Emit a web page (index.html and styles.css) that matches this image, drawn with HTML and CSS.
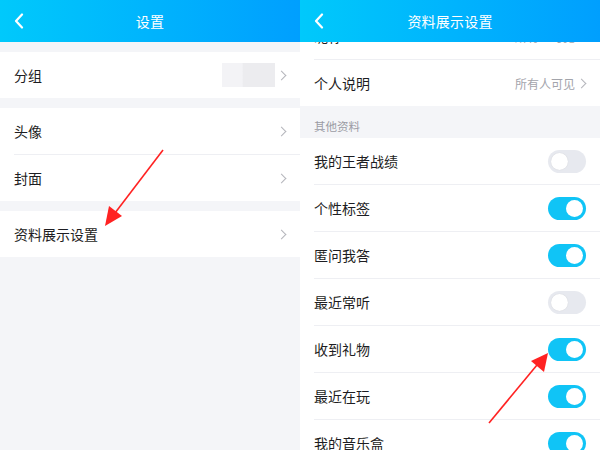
FILE: index.html
```html
<!DOCTYPE html>
<html lang="zh-CN">
<head>
<meta charset="utf-8">
<link rel="stylesheet" href="styles.css">
</head>
<body>
<div class="page">
  <section class="screen">
    <header class="bar">
      <svg class="back" width="10" height="16" viewBox="0 0 10 16"><path d="M8 1.5 L2 8 L8 14.5" fill="none" stroke="#fff" stroke-width="2.2" stroke-linecap="round" stroke-linejoin="round"/></svg>
      <h1 class="title">设置</h1>
    </header>
    <div class="body">
      <div class="group">
        <div class="row"><span class="label">分组</span><span class="blur"></span><span class="chev"></span></div>
      </div>
      <div class="group">
        <div class="row line"><span class="label">头像</span><span class="chev"></span></div>
        <div class="row"><span class="label">封面</span><span class="chev"></span></div>
      </div>
      <div class="group">
        <div class="row"><span class="label">资料展示设置</span><span class="chev"></span></div>
      </div>
    </div>
  </section>
  <section class="screen">
    <header class="bar">
      <svg class="back" width="10" height="16" viewBox="0 0 10 16"><path d="M8 1.5 L2 8 L8 14.5" fill="none" stroke="#fff" stroke-width="2.2" stroke-linecap="round" stroke-linejoin="round"/></svg>
      <h1 class="title">资料展示设置</h1>
    </header>
    <div class="scroll">
      <div class="list">
        <div class="row line"><span class="label">昵称</span><span class="value">所有人可见</span><span class="chev"></span></div>
        <div class="row"><span class="label">个人说明</span><span class="value">所有人可见</span><span class="chev"></span></div>
        <div class="section">其他资料</div>
        <div class="row line"><span class="label">我的王者战绩</span><span class="toggle"></span></div>
        <div class="row line"><span class="label">个性标签</span><span class="toggle on"></span></div>
        <div class="row line"><span class="label">匿问我答</span><span class="toggle on"></span></div>
        <div class="row line"><span class="label">最近常听</span><span class="toggle"></span></div>
        <div class="row line"><span class="label">收到礼物</span><span class="toggle on"></span></div>
        <div class="row line"><span class="label">最近在玩</span><span class="toggle on"></span></div>
        <div class="row"><span class="label">我的音乐盒</span><span class="toggle on"></span></div>
      </div>
    </div>
  </section>
  <svg class="arrows" width="600" height="450" viewBox="0 0 600 450">
    <line x1="163" y1="150" x2="115" y2="213" stroke="#f22" stroke-width="1.6"/>
    <polygon points="105,226 109,206 122,216" fill="#f22"/>
    <line x1="489" y1="423" x2="537" y2="365" stroke="#f22" stroke-width="1.6"/>
    <polygon points="548,353 544,372 531,361" fill="#f22"/>
  </svg>
</div>
</body>
</html>
```
FILE: styles.css
```css
* { box-sizing: border-box; margin: 0; padding: 0; }
html, body { width: 600px; height: 450px; overflow: hidden; }
body { font-family: "Noto Sans CJK SC", "Noto Sans", sans-serif; color: #1d1d22; background: #f4f5f8; }
.page { position: relative; display: flex; width: 600px; height: 450px; }
.screen { width: 300px; height: 450px; display: flex; flex-direction: column; background: #f4f5f8; overflow: hidden; }
.bar { height: 42px; flex: none; display: flex; align-items: center; justify-content: center; position: relative; background: linear-gradient(90deg, #00c9fb 0%, #00b4fd 50%, #009ffe 100%); }
.back { position: absolute; left: 14px; top: 13px; }
.title { font-size: 14px; font-weight: 400; color: #fff; letter-spacing: 0.2px; }
.body { padding-top: 10px; display: flex; flex-direction: column; gap: 10px; }
.group { background: #fff; }
.row { height: 46px; display: flex; align-items: center; padding: 0 13px 0 14px; background: #fff; position: relative; }
.row.line { height: 47px; padding-bottom: 1px; }
.row.line::after { content: ""; position: absolute; left: 14px; right: 0; bottom: 0; height: 1px; background: #eeeff3; }
.label { font-size: 14px; flex: 1; }
.value { font-size: 12px; color: #a3a4ab; margin-right: 3px; }
.chev { width: 7px; height: 7px; border-top: 1.3px solid #b4b5bb; border-right: 1.3px solid #b4b5bb; transform: rotate(45deg); margin-right: 2px; }
.blur { width: 53px; height: 24px; margin-right: 3px; background: linear-gradient(90deg, #f3f3f6 0%, #f3f3f6 38%, #ececef 40%, #ececef 100%); filter: blur(0.6px); }
.scroll { flex: 1; overflow: hidden; }
.list { margin-top: -29px; }
.section { height: 32px; background: #f4f5f8; font-size: 11.5px; color: #9b9ca4; padding: 0 0 4px 14px; display: flex; align-items: flex-end; }
.toggle { width: 38px; height: 23px; border-radius: 12px; background: #e7e9ef; position: relative; margin-right: 1px; }
.toggle::after { content: ""; position: absolute; top: 3px; left: 3px; width: 17px; height: 17px; border-radius: 50%; background: #fff; box-shadow: 0 0 1px rgba(0,0,0,0.15); }
.toggle.on { background: #10c4f6; }
.toggle.on::after { left: 18px; box-shadow: none; }
.arrows { position: absolute; left: 0; top: 0; pointer-events: none; }
```
